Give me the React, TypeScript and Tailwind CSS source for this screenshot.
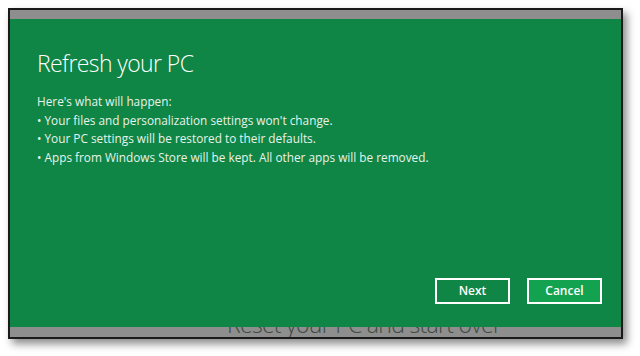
import { FC } from "react";

const App: FC = () => {
  return (
    <div className="w-[640px] h-[356px] bg-white pt-2 pl-2" style={{ fontFamily: "'Open Sans', 'Noto Sans', sans-serif" }}>
      <div className="flex flex-col w-[615px] h-[331px] border-2 border-[#1a1a1a] bg-[#8e8e8e] shadow-[4px_5px_8px_rgba(0,0,0,0.45)]">
        <div className="h-[9px] bg-[#8e8e8e]" />
        <div className="relative z-10 flex flex-col h-[308px] bg-[#0f8645] pl-[27px] pr-[19px] pt-[28px] pb-[23px] text-white">
          <div className="text-[23px] leading-[32px] font-light tracking-[-0.6px]">Refresh your PC</div>
          <div className="mt-[13px] text-[11.8px] leading-[18.5px] text-[#e8f3ec]">
            <div>Here's what will happen:</div>
            <div>• Your files and personalization settings won't change.</div>
            <div>• Your PC settings will be restored to their defaults.</div>
            <div>• Apps from Windows Store will be kept. All other apps will be removed.</div>
          </div>
          <div className="mt-auto flex justify-end gap-[17px]">
            <button className="w-[75px] h-[26px] border-2 border-white bg-[#0f8645] text-[12px] font-semibold text-white">
              Next
            </button>
            <button className="w-[75px] h-[26px] border-2 border-white bg-[#13a24f] text-[12px] font-semibold text-white">
              Cancel
            </button>
          </div>
        </div>
        <div className="h-[10px] overflow-hidden bg-[#8e8e8e]">
          <div className="-mt-[19px] pl-[217px] text-[23px] leading-[32px] font-light tracking-[-0.7px] text-[#3e4a42]">
            Reset your PC and start over
          </div>
        </div>
      </div>
    </div>
  );
};

export default App;
